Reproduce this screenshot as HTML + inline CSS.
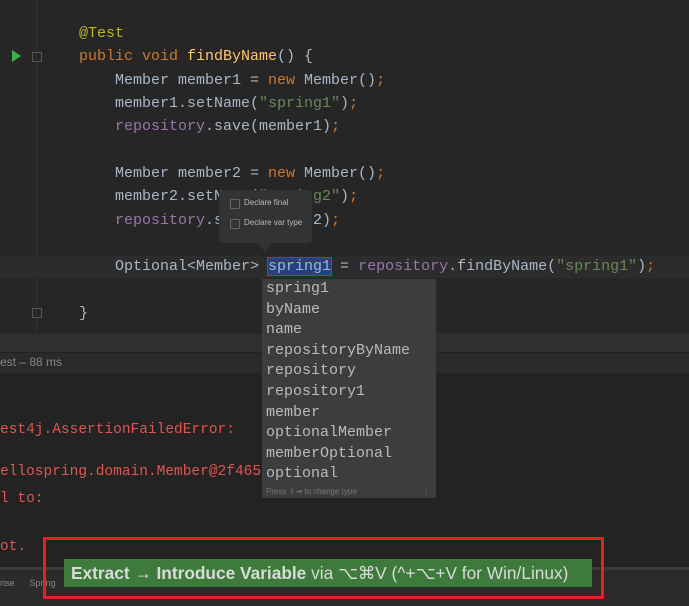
<!DOCTYPE html>
<html><head><style>
body{margin:0;width:689px;height:603px;background:#232323;position:relative;overflow:hidden;font-family:"Liberation Mono",monospace;}
.ab{position:absolute;}
.code{position:absolute;left:79px;font-size:15px;color:#a9b7c6;white-space:pre;line-height:23.35px;}
.k{color:#cc7832}.a{color:#bbb529}.f{color:#ffc66d}.s{color:#6a8759}.p{color:#9876aa}
.list div{height:20.6px;line-height:20.6px;font-size:15px;color:#bbbbbb;padding-left:4px}
.con{position:absolute;left:0;font-size:14.5px;color:#e0554f;white-space:pre;}
</style></head><body>
<div class="ab" style="left:0;top:0;width:689px;height:334px;background:#262626"></div>
<div class="ab" style="left:36px;top:0;width:1px;height:334px;background:#333"></div>
<div class="ab" style="left:0;top:256px;width:689px;height:22px;background:#2c2c2c"></div>
<div class="ab" style="left:12px;top:50px;width:0;height:0;border-left:9px solid #3fae49;border-top:6px solid transparent;border-bottom:6px solid transparent"></div>
<div class="ab" style="left:32px;top:52px;width:8px;height:8px;border:1px solid #555;"></div>
<div class="ab" style="left:32px;top:308px;width:8px;height:8px;border:1px solid #555;"></div>
<div class="code" style="top:22px"><span class="a">@Test</span>
<span class="k">public void </span><span class="f">findByName</span>() {
    Member member1 = <span class="k">new </span>Member()<span class="k">;</span>
    member1.setName(<span class="s">"spring1"</span>)<span class="k">;</span>
    <span class="p">repository</span>.save(member1)<span class="k">;</span>

    Member member2 = <span class="k">new </span>Member()<span class="k">;</span>
    member2.setName(<span class="s">"spring2"</span>)<span class="k">;</span>
    <span class="p">repository</span>.save(member2)<span class="k">;</span>

    Optional&lt;Member&gt; <span style="background:#214283;outline:1px solid #a33">spring1</span> = <span class="p">repository</span>.findByName(<span class="s">"spring1"</span>)<span class="k">;</span>

}
</div>
<div class="ab" style="left:219px;top:190px;width:93px;height:53px;background:#323334;border-radius:4px;font-family:'Liberation Sans',sans-serif;font-size:8px;color:#bbb">
<div class="ab" style="left:11px;top:9px;width:8px;height:8px;border:1px solid #666;border-radius:2px"></div><div class="ab" style="left:25px;top:8px">Declare final</div>
<div class="ab" style="left:11px;top:29px;width:8px;height:8px;border:1px solid #666;border-radius:2px"></div><div class="ab" style="left:25px;top:28px">Declare var type</div>
</div>
<div class="ab" style="left:258px;top:243px;width:0;height:0;border-left:7px solid transparent;border-right:7px solid transparent;border-top:9px solid #323334"></div>
<div class="ab" style="left:0;top:334px;width:689px;height:18px;background:#2f2f2f"></div>
<div class="ab" style="left:0;top:352px;width:689px;height:20px;background:#2a2a2a;border-top:1px solid #222"></div>
<div class="ab" style="left:0;top:355px;font-family:'Liberation Sans',sans-serif;font-size:12px;color:#888">est – 88 ms</div>
<div class="con" style="top:422px">est4j.AssertionFailedError:</div>
<div class="con" style="top:464px">ellospring.domain.Member@2f465</div>
<div class="con" style="top:491px">l to:</div>
<div class="con" style="top:539px">ot.</div>
<div class="ab" style="left:0;top:567px;width:689px;height:36px;background:#2b2b2b;border-top:3px solid #3a3a3a"></div>
<div class="ab" style="left:0;top:578px;font-family:'Liberation Sans',sans-serif;font-size:9px;color:#888">rise &nbsp;&nbsp;&nbsp;&nbsp; Spring</div>
<div class="ab list" style="left:262px;top:279px;width:174px;height:219px;background:#3c3d3e">
<div>spring1</div><div>byName</div><div>name</div><div>repositoryByName</div><div>repository</div><div>repository1</div><div>member</div><div>optionalMember</div><div>memberOptional</div><div>optional</div>
<div style="font-family:'Liberation Sans',sans-serif;font-size:8px;color:#777;height:14px;line-height:14px">Press ⇧⇥ to change type<span style="float:right;margin-right:6px">⋮</span></div>
</div>
<div class="ab" style="left:43px;top:537px;width:555px;height:56px;border:3px solid #e52222"></div>
<div class="ab" style="left:64px;top:559px;width:528px;height:28px;background:#3d7a3c;font-family:'Liberation Sans',sans-serif;font-size:17.3px;color:#d8dcd8;line-height:28px;padding-left:7px;box-sizing:border-box;white-space:nowrap;overflow:hidden"><b>Extract → Introduce Variable</b> via ⌥⌘V (^+⌥+V for Win/Linux)</div>
</body></html>
